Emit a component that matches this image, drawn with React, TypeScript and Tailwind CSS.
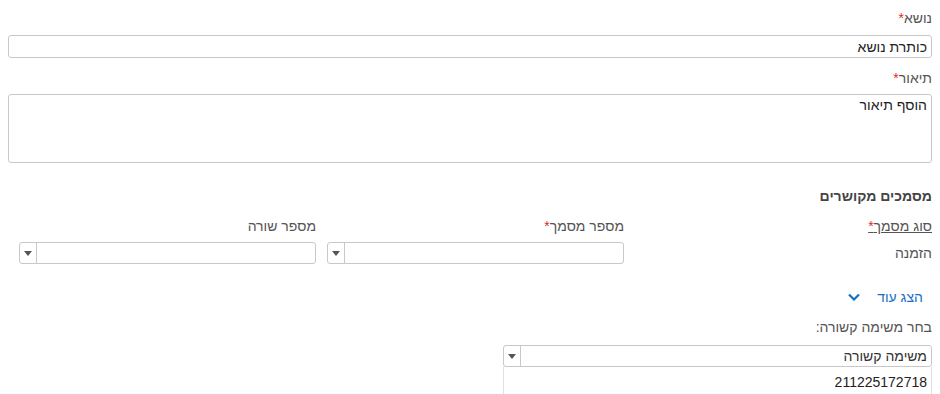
function Req() {
  return <span className="text-[#e0281f]">*</span>;
}

function Arrow() {
  return (
    <svg width="8" height="5" viewBox="0 0 8 5" className="block">
      <path d="M0 0h8L4 5z" fill="#555" />
    </svg>
  );
}

function SelectBox({ value, className = '' }: { value?: string; className?: string }) {
  return (
    <div className={`flex h-[22px] items-stretch rounded-[3px] border border-[#c8c8c8] bg-white ${className}`}>
      <div className="flex-1 truncate px-[4px] leading-[20px] text-[#333]">{value}</div>
      <div className="flex w-[17px] items-center justify-center border-r border-[#c8c8c8]">
        <Arrow />
      </div>
    </div>
  );
}

export default function App() {
  return (
    <div dir="rtl" className="min-h-[394px] bg-white px-2 pt-2 font-['Liberation_Sans',Arial,sans-serif] text-[14px] text-[#555]">
      {/* Subject */}
      <div className="leading-[20px]">
        נושא<Req />
      </div>
      <input
        readOnly
        value="כותרת נושא"
        className="mt-[7px] block h-[23px] w-full rounded-[3px] border border-[#c8c8c8] px-[4px] text-[14px] text-[#222] outline-none"
      />

      {/* Description */}
      <div className="mt-[10px] leading-[20px]">
        תיאור<Req />
      </div>
      <textarea
        readOnly
        value="הוסף תיאור"
        className="mt-[6px] block h-[69px] w-full resize-none rounded-[3px] border border-[#c8c8c8] px-[4px] py-[1px] text-[14px] leading-[18px] text-[#222] outline-none"
      />

      {/* Linked documents */}
      <div className="mt-[23px] text-[14px] font-bold leading-[20px] text-[#444]">מסמכים מקושרים</div>

      <div className="mt-[10px] grid grid-cols-3">
        <div className="leading-[20px]">
          <span className="underline">
            סוג מסמך<Req />
          </span>
        </div>
        <div className="leading-[20px]">
          מספר מסמך<Req />
        </div>
        <div className="leading-[20px]">מספר שורה</div>

        <div className="mt-[6px] flex h-[22px] items-center">הזמנה</div>
        <div className="mt-[6px] pl-[11px]">
          <SelectBox />
        </div>
        <div className="mt-[6px] pl-[11px]">
          <SelectBox />
        </div>
      </div>

      {/* Show more */}
      <div className="mt-[23px] flex items-center gap-[17px] pr-[9px] leading-[20px] text-[#1a6fc4]">
        <span>הצג עוד</span>
        <svg width="12" height="8" viewBox="0 0 12 8" className="block">
          <path d="M1 1.5l5 5 5-5" fill="none" stroke="#1a6fc4" strokeWidth="2.2" />
        </svg>
      </div>

      {/* Related task */}
      <div className="mt-[10px] leading-[20px]">בחר משימה קשורה:</div>
      <div className="mt-[8px] w-[429px]">
        <SelectBox value="משימה קשורה" />
        <div className="h-[30px] border-x border-[#e0e0e0] px-[4px] pt-[6px] leading-[18px] text-[#222]">
          211225172718
        </div>
      </div>
    </div>
  );
}
